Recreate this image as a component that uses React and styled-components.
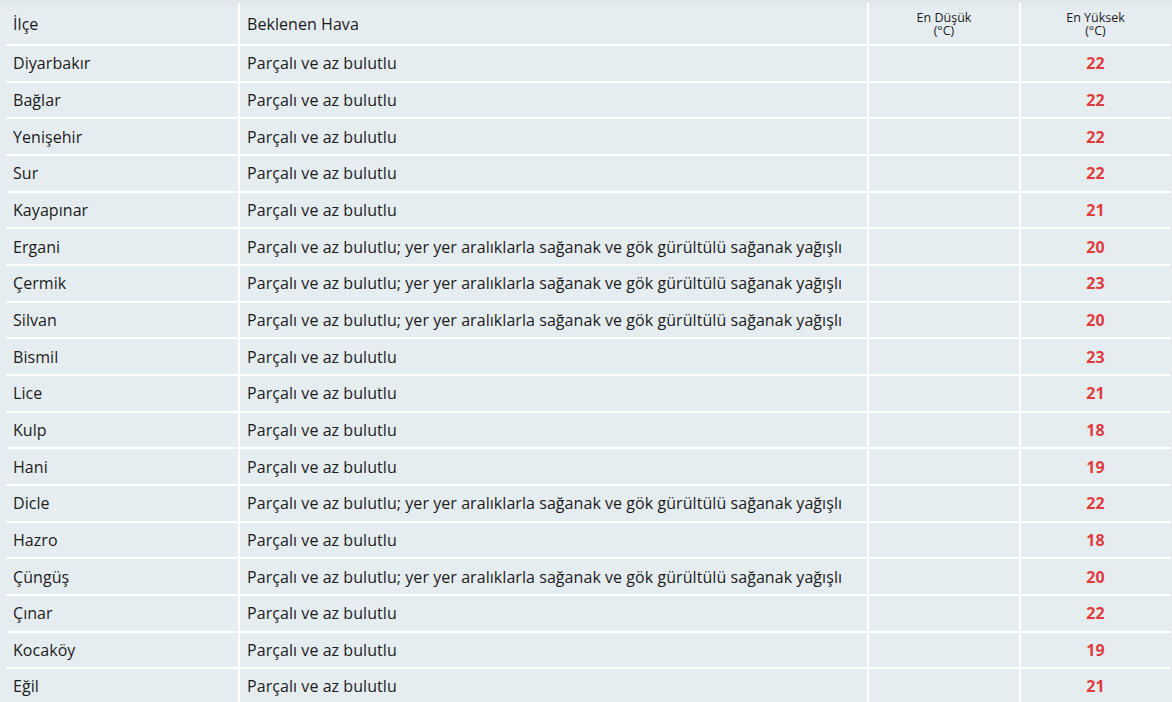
import React from 'react';
import styled, { createGlobalStyle } from 'styled-components';

const rows = [
  ['Diyarbakır', 'Parçalı ve az bulutlu', 22],
  ['Bağlar', 'Parçalı ve az bulutlu', 22],
  ['Yenişehir', 'Parçalı ve az bulutlu', 22],
  ['Sur', 'Parçalı ve az bulutlu', 22],
  ['Kayapınar', 'Parçalı ve az bulutlu', 21],
  ['Ergani', 'Parçalı ve az bulutlu; yer yer aralıklarla sağanak ve gök gürültülü sağanak yağışlı', 20],
  ['Çermik', 'Parçalı ve az bulutlu; yer yer aralıklarla sağanak ve gök gürültülü sağanak yağışlı', 23],
  ['Silvan', 'Parçalı ve az bulutlu; yer yer aralıklarla sağanak ve gök gürültülü sağanak yağışlı', 20],
  ['Bismil', 'Parçalı ve az bulutlu', 23],
  ['Lice', 'Parçalı ve az bulutlu', 21],
  ['Kulp', 'Parçalı ve az bulutlu', 18],
  ['Hani', 'Parçalı ve az bulutlu', 19],
  ['Dicle', 'Parçalı ve az bulutlu; yer yer aralıklarla sağanak ve gök gürültülü sağanak yağışlı', 22],
  ['Hazro', 'Parçalı ve az bulutlu', 18],
  ['Çüngüş', 'Parçalı ve az bulutlu; yer yer aralıklarla sağanak ve gök gürültülü sağanak yağışlı', 20],
  ['Çınar', 'Parçalı ve az bulutlu', 22],
  ['Kocaköy', 'Parçalı ve az bulutlu', 19],
  ['Eğil', 'Parçalı ve az bulutlu', 21],
];

const GlobalStyle = createGlobalStyle`
  body {
    margin: 0;
    background: linear-gradient(#dfe6ea 0, #e6edf1 10px) #e6edf1;
    font-family: "Open Sans", "Noto Sans", sans-serif;
    color: #1b1b1b;
    overflow: hidden;
  }
`;

const Wrap = styled.div`
  padding: 3px 2px 0 6px;
`;

const Table = styled.table`
  width: 1164px;
  table-layout: fixed;
  border-collapse: separate;
  border-spacing: 0;
`;

const Head = styled.th`
  height: 41px;
  padding: 0 7px;
  border-bottom: 2px solid #fff;
  border-left: ${p => (p.$first ? 'none' : '2px solid #fff')};
  font-weight: 400;
  font-size: ${p => (p.$small ? '12.5px' : '16px')};
  line-height: ${p => (p.$small ? '13px' : '20px')};
  letter-spacing: ${p => (p.$small ? '0' : '0.06px')};
  text-align: ${p => (p.$small ? 'center' : 'left')};
  vertical-align: middle;
  box-sizing: content-box;
`;

const Cell = styled.td`
  height: 34.67px;
  padding: 0 7px;
  border-bottom: 2px solid #fff;
  border-left: ${p => (p.$first ? 'none' : '2px solid #fff')};
  font-size: 16px;
  line-height: 20px;
  letter-spacing: 0.06px;
  white-space: nowrap;
  vertical-align: middle;
  box-sizing: content-box;
`;

const Temp = styled(Cell)`
  text-align: center;
  font-weight: 700;
  color: #e03c3e;
`;

export default function App() {
  return (
    <Wrap>
      <GlobalStyle />
      <Table>
        <colgroup>
          <col style={{ width: 232 }} />
          <col style={{ width: 629 }} />
          <col style={{ width: 152 }} />
          <col style={{ width: 151 }} />
        </colgroup>
        <thead>
          <tr>
            <Head $first>İlçe</Head>
            <Head>Beklenen Hava</Head>
            <Head $small>En Düşük<br />(°C)</Head>
            <Head $small>En Yüksek<br />(°C)</Head>
          </tr>
        </thead>
        <tbody>
          {rows.map(([name, weather, high]) => (
            <tr key={name}>
              <Cell $first>{name}</Cell>
              <Cell>{weather}</Cell>
              <Cell />
              <Temp>{high}</Temp>
            </tr>
          ))}
        </tbody>
      </Table>
    </Wrap>
  );
}
